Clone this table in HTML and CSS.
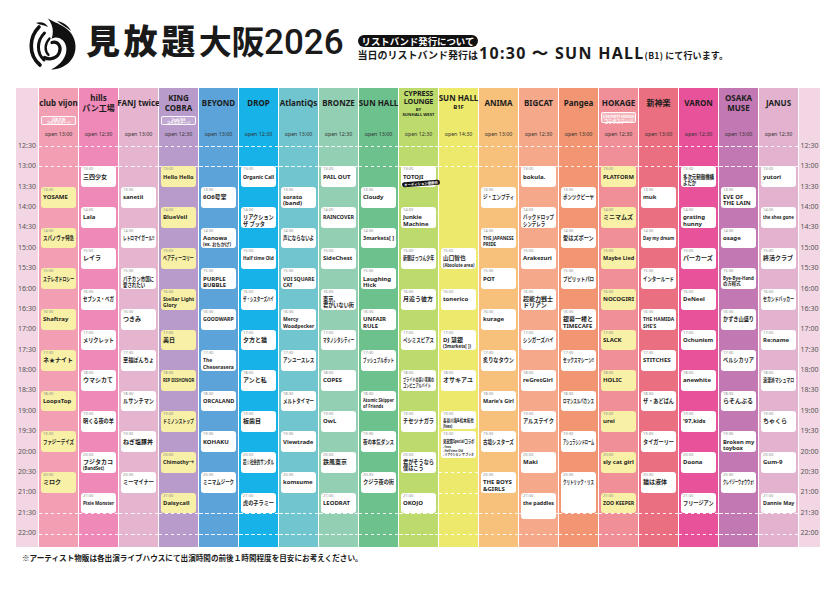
FILE: index.html
```html
<!DOCTYPE html>
<html lang="ja">
<head>
<meta charset="utf-8">
<title>見放題大阪2026 タイムテーブル</title>
<link rel="stylesheet" href="styles.css">
</head>
<body>
<header class="top">
  <div class="logo">
    <svg viewBox="0 0 50 52" width="50" height="52">
      <path d="M12 9 C2 19 1 37 13 47" fill="none" stroke="#111" stroke-width="3.6" stroke-linecap="round"/>
      <path d="M17.5 15 C9.5 23 9.5 35 17 42" fill="none" stroke="#111" stroke-width="3" stroke-linecap="round"/>
      <path d="M22.5 20.5 C17.5 26 17.5 33 21.5 37" fill="none" stroke="#111" stroke-width="2.4" stroke-linecap="round"/>
      <path d="M21 0.5 C30 6 45 9 48 24 C51 39 40 51 24 51.5 C35 46 41 37 39 28 C37 20 29 17.5 24.5 21 C27 14 26 7 21 0.5 Z" fill="#111"/>
      <path d="M25 24.5 C31 23 34.5 28.5 32.5 34 C30.5 40 23 42.5 17.5 39.5" fill="none" stroke="#111" stroke-width="3.2" stroke-linecap="round"/>
      <path d="M9 5 C14 3 19 5 21 9 C17 7 13 7 9 5 Z" fill="#111"/>
      <path d="M30 3 C36 4 42 8 44 13 C39 9 35 7 30 3 Z" fill="#111"/>
    </svg>
  </div>
  <h1 class="title"><span class="t1">見放題</span><span class="t2">大阪</span><span class="t3">2026</span></h1>
  <div class="info">
    <div class="pill">リストバンド発行について</div>
    <p class="wb">当日のリストバンド発行は<b>10:30 〜 SUN HALL</b><span class="b1">(B1)</span><span class="tail">にて行います。</span></p>
  </div>
</header>

<main class="table">
  <div class="timecol">
    <div>12:30</div><div>13:00</div><div>13:30</div><div>14:00</div><div>14:30</div><div>15:00</div><div>15:30</div><div>16:00</div><div>16:30</div><div>17:00</div><div>17:30</div><div>18:00</div><div>18:30</div><div>19:00</div><div>19:30</div><div>20:00</div><div>20:30</div><div>21:00</div><div>21:30</div><div>22:00</div>
  </div>

  <section class="venue c1">
    <div class="vname">club vijon</div>
    <div class="collab"><span class="badge">学生大阪<br>コラボステージ</span></div>
    <div class="open">open 13:00</div>
    <div class="slots">
      <div class="slot y r3"><div class="tm">13:30</div><div class="nm">YOSAME</div></div>
      <div class="slot y r5"><div class="tm">14:30</div><div class="nm">スパノヴァ特急</div></div>
      <div class="slot y r7"><div class="tm">15:30</div><div class="nm">ステレオドロシー</div></div>
      <div class="slot y r9"><div class="tm">16:30</div><div class="nm">Shaftray</div></div>
      <div class="slot y r11"><div class="tm">17:30</div><div class="nm">ネ★ナイト</div></div>
      <div class="slot y r13"><div class="tm">18:30</div><div class="nm">LoopsTop</div></div>
      <div class="slot y r15"><div class="tm">19:30</div><div class="nm">ファジーデイズ</div></div>
      <div class="slot y r17"><div class="tm">20:30</div><div class="nm">ミロク</div></div>
    </div>
  </section>

  <section class="venue c2">
    <div class="vname two">hills<br>パン工場</div>
    <div class="collab"></div>
    <div class="open">open 12:30</div>
    <div class="slots">
      <div class="slot r2"><div class="tm">13:00</div><div class="nm">三四少女</div></div>
      <div class="slot r4"><div class="tm">14:00</div><div class="nm">Lala</div></div>
      <div class="slot r6"><div class="tm">15:00</div><div class="nm">レイラ</div></div>
      <div class="slot r8"><div class="tm">16:00</div><div class="nm">セブンス・ベガ</div></div>
      <div class="slot r10"><div class="tm">17:00</div><div class="nm">メリクレット</div></div>
      <div class="slot r12"><div class="tm">18:00</div><div class="nm">ウマシカて</div></div>
      <div class="slot r14"><div class="tm">19:00</div><div class="nm">明くる夜の羊</div></div>
      <div class="slot r16"><div class="tm">20:00</div><div class="nm">フジタカコ<br><span class="sub">(BandSet)</span></div></div>
      <div class="slot r18"><div class="tm">21:00</div><div class="nm">Pixie Monster</div></div>
    </div>
  </section>

  <section class="venue c3">
    <div class="vname">FANJ twice</div>
    <div class="collab"></div>
    <div class="open">open 13:00</div>
    <div class="slots">
      <div class="slot r3"><div class="tm">13:30</div><div class="nm">sanetii</div></div>
      <div class="slot r5"><div class="tm">14:30</div><div class="nm">レトロマイガール!!</div></div>
      <div class="slot r7"><div class="tm">15:30</div><div class="nm">パチカン市国に<br>愛されたい</div></div>
      <div class="slot r9"><div class="tm">16:30</div><div class="nm">つきみ</div></div>
      <div class="slot r11"><div class="tm">17:30</div><div class="nm">至福ぽんちょ</div></div>
      <div class="slot r13"><div class="tm">18:30</div><div class="nm">ルサンチマン</div></div>
      <div class="slot r15"><div class="tm">19:30</div><div class="nm">ねぎ塩豚丼</div></div>
      <div class="slot r17"><div class="tm">20:30</div><div class="nm">ミーマイナー</div></div>
    </div>
  </section>

  <section class="venue c4">
    <div class="vname two">KING<br>COBRA</div>
    <div class="collab"><span class="badge">2ndLINE<br>コラボステージ</span></div>
    <div class="open">open 12:30</div>
    <div class="slots">
      <div class="slot y r2"><div class="tm">13:00</div><div class="nm">Hello Hello</div></div>
      <div class="slot y r4"><div class="tm">14:00</div><div class="nm">BlueVeil</div></div>
      <div class="slot y r6"><div class="tm">15:00</div><div class="nm">ベアディーコリー</div></div>
      <div class="slot y r8"><div class="tm">16:00</div><div class="nm">Stellar Light<br>Glory</div></div>
      <div class="slot y r10"><div class="tm">17:00</div><div class="nm">美日</div></div>
      <div class="slot y r12"><div class="tm">18:00</div><div class="nm">RIP DISHONOR</div></div>
      <div class="slot y r14"><div class="tm">19:00</div><div class="nm">ドミノンストップ</div></div>
      <div class="slot y r16"><div class="tm">20:00</div><div class="nm">Chimothy→</div></div>
      <div class="slot y r18"><div class="tm">21:00</div><div class="nm">Daisycall</div></div>
    </div>
  </section>

  <section class="venue c5">
    <div class="vname">BEYOND</div>
    <div class="collab"></div>
    <div class="open">open 13:00</div>
    <div class="slots">
      <div class="slot r3"><div class="tm">13:30</div><div class="nm">6O6号室</div></div>
      <div class="slot r5"><div class="tm">14:30</div><div class="nm">Aonowa<br><span class="sub">(ex. おもかげ)</span></div></div>
      <div class="slot r7"><div class="tm">15:30</div><div class="nm">PURPLE<br>BUBBLE</div></div>
      <div class="slot r9"><div class="tm">16:30</div><div class="nm">GOODWARP</div></div>
      <div class="slot r11"><div class="tm">17:30</div><div class="nm">The<br>Cheserasera</div></div>
      <div class="slot r13"><div class="tm">18:30</div><div class="nm">ORCALAND</div></div>
      <div class="slot r15"><div class="tm">19:30</div><div class="nm">KOHAKU</div></div>
      <div class="slot r17"><div class="tm">20:30</div><div class="nm">ミニマムジーク</div></div>
    </div>
  </section>

  <section class="venue c6">
    <div class="vname">DROP</div>
    <div class="collab"></div>
    <div class="open">open 12:30</div>
    <div class="slots">
      <div class="slot r2"><div class="tm">13:00</div><div class="nm">Organic Call</div></div>
      <div class="slot r4"><div class="tm">14:00</div><div class="nm">リアクション<br>ザ ブッタ</div></div>
      <div class="slot r6"><div class="tm">15:00</div><div class="nm">Half time Old</div></div>
      <div class="slot r8"><div class="tm">16:00</div><div class="nm">ザ・シスターズハイ</div></div>
      <div class="slot r10"><div class="tm">17:00</div><div class="nm">夕方と猫</div></div>
      <div class="slot r12"><div class="tm">18:00</div><div class="nm">アンと私</div></div>
      <div class="slot r14"><div class="tm">19:00</div><div class="nm">板歯目</div></div>
      <div class="slot r16"><div class="tm">20:00</div><div class="nm">超☆社会的サンダル</div></div>
      <div class="slot r18"><div class="tm">21:00</div><div class="nm">虎の子ラミー</div></div>
    </div>
  </section>

  <section class="venue c7">
    <div class="vname">AtlantiQs</div>
    <div class="collab"></div>
    <div class="open">open 13:00</div>
    <div class="slots">
      <div class="slot r3"><div class="tm">13:30</div><div class="nm">sorato<br>(band)</div></div>
      <div class="slot r5"><div class="tm">14:30</div><div class="nm">声にならないよ</div></div>
      <div class="slot r7"><div class="tm">15:30</div><div class="nm">VOI SQUARE<br>CAT</div></div>
      <div class="slot r9"><div class="tm">16:30</div><div class="nm">Mercy<br>Woodpecker</div></div>
      <div class="slot r11"><div class="tm">17:30</div><div class="nm">アンユースレス</div></div>
      <div class="slot r13"><div class="tm">18:30</div><div class="nm">メルトタイマー</div></div>
      <div class="slot r15"><div class="tm">19:30</div><div class="nm">Viewtrade</div></div>
      <div class="slot r17"><div class="tm">20:30</div><div class="nm">komsume</div></div>
    </div>
  </section>

  <section class="venue c8">
    <div class="vname">BRONZE</div>
    <div class="collab"></div>
    <div class="open">open 12:30</div>
    <div class="slots">
      <div class="slot r2"><div class="tm">13:00</div><div class="nm">PAIL OUT</div></div>
      <div class="slot r4"><div class="tm">14:00</div><div class="nm">RAINCOVER</div></div>
      <div class="slot r6"><div class="tm">15:00</div><div class="nm">SideChest</div></div>
      <div class="slot r8"><div class="tm">16:00</div><div class="nm">東京、<br>君がいない街</div></div>
      <div class="slot r10"><div class="tm">17:00</div><div class="nm">マタノシタシティー</div></div>
      <div class="slot r12"><div class="tm">18:00</div><div class="nm">COPES</div></div>
      <div class="slot r14"><div class="tm">19:00</div><div class="nm">OwL</div></div>
      <div class="slot r16"><div class="tm">20:00</div><div class="nm">鉄風東京</div></div>
      <div class="slot r18"><div class="tm">21:00</div><div class="nm">LEODRAT</div></div>
    </div>
  </section>

  <section class="venue c9">
    <div class="vname">SUN HALL</div>
    <div class="collab"></div>
    <div class="open">open 13:00</div>
    <div class="slots">
      <div class="slot r3"><div class="tm">13:30</div><div class="nm">Cloudy</div></div>
      <div class="slot r5"><div class="tm">14:30</div><div class="nm">3markets[ ]</div></div>
      <div class="slot r7"><div class="tm">15:30</div><div class="nm">Laughing<br>Hick</div></div>
      <div class="slot r9"><div class="tm">16:30</div><div class="nm">UNFAIR<br>RULE</div></div>
      <div class="slot r11"><div class="tm">17:30</div><div class="nm">プッシュプルポット</div></div>
      <div class="slot r13"><div class="tm">18:30</div><div class="nm sm">Atomic Skipper<br>of Friends</div></div>
      <div class="slot r15"><div class="tm">19:30</div><div class="nm">夜の本気ダンス</div></div>
      <div class="slot r17"><div class="tm">20:30</div><div class="nm">クジラ夜の街</div></div>
    </div>
  </section>

  <section class="venue c10">
    <div class="vname cy"><span class="cyn">CYPRESS<br>LOUNGE</span><small>BY<br>SUNHALL WEST</small></div>
    <div class="collab"></div>
    <div class="open">open 12:30</div>
    <div class="slots">
      <div class="slot r2"><div class="tm">13:00</div><div class="nm">TOTOJI</div><span class="aud">オーディション優勝枠</span></div>
      <div class="slot r4"><div class="tm">14:00</div><div class="nm">Junkie<br>Machine</div></div>
      <div class="slot r6"><div class="tm">15:00</div><div class="nm">新聞ぼっつん少年</div></div>
      <div class="slot r8"><div class="tm">16:00</div><div class="nm">月追う彼方</div></div>
      <div class="slot r10"><div class="tm">17:00</div><div class="nm">ペシミスピアス</div></div>
      <div class="slot r12"><div class="tm">18:00</div><div class="nm sm">プライドの高い某国の<br>コンビニアルバイト</div></div>
      <div class="slot r14"><div class="tm">19:00</div><div class="nm">チセツナガラ</div></div>
      <div class="slot r16"><div class="tm">20:00</div><div class="nm">君がそうなら<br>僕はこう</div></div>
      <div class="slot r18"><div class="tm">21:00</div><div class="nm">OKOJO</div></div>
    </div>
  </section>

  <section class="venue c11">
    <div class="vname b1f"><span>SUN HALL</span><small>B1F</small></div>
    <div class="collab"></div>
    <div class="open">open 14:30</div>
    <div class="slots extra">
      <div class="slot r6"><div class="tm">15:00</div><div class="nm">山口智也<br><span class="sub">(Absolute area)</span></div></div>
      <div class="slot r8"><div class="tm">16:00</div><div class="nm">tonerico</div></div>
      <div class="slot r10"><div class="tm">17:00</div><div class="nm">DJ 慧銀<br><span class="sub">(3markets[ ])</span></div></div>
      <div class="slot r12"><div class="tm">18:00</div><div class="nm">オサキアユ</div></div>
      <div class="slot r14 short"><div class="tm">19:00</div><div class="nm sm">長谷川海&amp;松本拓也<br><span class="sub">(fews)</span></div></div>
      <div class="slot r15 sp"><div class="tm">19:30</div><div class="nm sm">見放題Specialコラボ</div><div class="lst">- fews<br>- Half time Old<br>- リアクション ザ ブッタ</div></div>
    </div>
  </section>

  <section class="venue c12">
    <div class="vname">ANIMA</div>
    <div class="collab"></div>
    <div class="open">open 13:00</div>
    <div class="slots">
      <div class="slot r3"><div class="tm">13:30</div><div class="nm">ジ・エンプティ</div></div>
      <div class="slot r5"><div class="tm">14:30</div><div class="nm">THE JAPANESE<br>PRIDE</div></div>
      <div class="slot r7"><div class="tm">15:30</div><div class="nm">POT</div></div>
      <div class="slot r9"><div class="tm">16:30</div><div class="nm">kurage</div></div>
      <div class="slot r11"><div class="tm">17:30</div><div class="nm">炙りなタウン</div></div>
      <div class="slot r13"><div class="tm">18:30</div><div class="nm">Marie's Girl</div></div>
      <div class="slot r15"><div class="tm">19:30</div><div class="nm">古墳シスターズ</div></div>
      <div class="slot r17"><div class="tm">20:30</div><div class="nm">THE BOYS<br>&amp;GIRLS</div></div>
    </div>
  </section>

  <section class="venue c13">
    <div class="vname">BIGCAT</div>
    <div class="collab"></div>
    <div class="open">open 12:30</div>
    <div class="slots">
      <div class="slot r2"><div class="tm">13:00</div><div class="nm">bokula.</div></div>
      <div class="slot r4"><div class="tm">14:00</div><div class="nm">バックドロップ<br>シンデレラ</div></div>
      <div class="slot r6"><div class="tm">15:00</div><div class="nm">Arakezuri</div></div>
      <div class="slot r8"><div class="tm">16:00</div><div class="nm">超能力戦士<br>ドリアン</div></div>
      <div class="slot r10"><div class="tm">17:00</div><div class="nm">シンガーズハイ</div></div>
      <div class="slot r12"><div class="tm">18:00</div><div class="nm">reGretGirl</div></div>
      <div class="slot r14"><div class="tm">19:00</div><div class="nm">アルステイク</div></div>
      <div class="slot r16"><div class="tm">20:00</div><div class="nm">Maki</div></div>
      <div class="slot r18 mid"><div class="tm">21:00</div><div class="nm">the paddles</div></div>
    </div>
  </section>

  <section class="venue c14">
    <div class="vname">Pangea</div>
    <div class="collab"></div>
    <div class="open">open 13:00</div>
    <div class="slots">
      <div class="slot r3"><div class="tm">13:30</div><div class="nm">ポンツクピーヤ</div></div>
      <div class="slot r5"><div class="tm">14:30</div><div class="nm">愛はズボーン</div></div>
      <div class="slot r7"><div class="tm">15:30</div><div class="nm">プピリットパロ</div></div>
      <div class="slot r9"><div class="tm">16:30</div><div class="nm">銀幕一楼と<br>TIMECAFE</div></div>
      <div class="slot r11"><div class="tm">17:30</div><div class="nm">セックスマシーン!!</div></div>
      <div class="slot r13"><div class="tm">18:30</div><div class="nm">ロマンスルバカンス</div></div>
      <div class="slot r15"><div class="tm">19:30</div><div class="nm">アシュラシンドローム</div></div>
      <div class="slot r17 tall"><div class="tm">20:30</div><div class="nm">クリトリック・リス</div></div>
    </div>
  </section>

  <section class="venue c15">
    <div class="vname">HOKAGE</div>
    <div class="collab"><span class="badge hk"><small>LIVE PARTY HOKAGE</small><br>コラボステージ</span></div>
    <div class="open">open 12:30</div>
    <div class="slots">
      <div class="slot y r2"><div class="tm">13:00</div><div class="nm">PLATFORM</div></div>
      <div class="slot y r4"><div class="tm">14:00</div><div class="nm">ミニマムズ</div></div>
      <div class="slot y r6"><div class="tm">15:00</div><div class="nm">Maybe Lied</div></div>
      <div class="slot y r8"><div class="tm">16:00</div><div class="nm">NOCOGIRI</div></div>
      <div class="slot y r10"><div class="tm">17:00</div><div class="nm">SLACK</div></div>
      <div class="slot y r12"><div class="tm">18:00</div><div class="nm">HOLIC</div></div>
      <div class="slot y r14"><div class="tm">19:00</div><div class="nm">urei</div></div>
      <div class="slot y r16"><div class="tm">20:00</div><div class="nm">sly cat girl</div></div>
      <div class="slot y r18"><div class="tm">21:00</div><div class="nm">ZOO KEEPER</div></div>
    </div>
  </section>

  <section class="venue c16">
    <div class="vname">新神楽</div>
    <div class="collab"></div>
    <div class="open">open 13:00</div>
    <div class="slots">
      <div class="slot r3"><div class="tm">13:30</div><div class="nm">muk</div></div>
      <div class="slot r5"><div class="tm">14:30</div><div class="nm">Day my dream</div></div>
      <div class="slot r7"><div class="tm">15:30</div><div class="nm">インタールード</div></div>
      <div class="slot r9"><div class="tm">16:30</div><div class="nm">THE HAMIDA<br>SHE'S</div></div>
      <div class="slot r11"><div class="tm">17:30</div><div class="nm">STITCHES</div></div>
      <div class="slot r13"><div class="tm">18:30</div><div class="nm">ザ・あどばん</div></div>
      <div class="slot r15"><div class="tm">19:30</div><div class="nm">タイガーリー</div></div>
      <div class="slot r17"><div class="tm">20:30</div><div class="nm">猫は液体</div></div>
    </div>
  </section>

  <section class="venue c17">
    <div class="vname">VARON</div>
    <div class="collab"></div>
    <div class="open">open 12:30</div>
    <div class="slots">
      <div class="slot r2"><div class="tm">13:00</div><div class="nm">多次元制御機構<br>よだか</div></div>
      <div class="slot r4"><div class="tm">14:00</div><div class="nm">grating<br>hunny</div></div>
      <div class="slot r6"><div class="tm">15:00</div><div class="nm">パーカーズ</div></div>
      <div class="slot r8"><div class="tm">16:00</div><div class="nm">DeNeel</div></div>
      <div class="slot r10"><div class="tm">17:00</div><div class="nm">Ochunism</div></div>
      <div class="slot r12"><div class="tm">18:00</div><div class="nm">anewhite</div></div>
      <div class="slot r14"><div class="tm">19:00</div><div class="nm">'97,kids</div></div>
      <div class="slot r16"><div class="tm">20:00</div><div class="nm">Doona</div></div>
      <div class="slot r18"><div class="tm">21:00</div><div class="nm">フリージアン</div></div>
    </div>
  </section>

  <section class="venue c18">
    <div class="vname two">OSAKA<br>MUSE</div>
    <div class="collab"></div>
    <div class="open">open 13:00</div>
    <div class="slots">
      <div class="slot r3"><div class="tm">13:30</div><div class="nm">EVE OF<br>THE LAIN</div></div>
      <div class="slot r5"><div class="tm">14:30</div><div class="nm">osage</div></div>
      <div class="slot r7"><div class="tm">15:30</div><div class="nm sm">Bye-Bye-Hand<br>の方程式</div></div>
      <div class="slot r9"><div class="tm">16:30</div><div class="nm">かずき山盛り</div></div>
      <div class="slot r11"><div class="tm">17:30</div><div class="nm">ベルシカリア</div></div>
      <div class="slot r13"><div class="tm">18:30</div><div class="nm">らそんぶる</div></div>
      <div class="slot r15"><div class="tm">19:30</div><div class="nm">Broken my<br>toybox</div></div>
      <div class="slot r17"><div class="tm">20:30</div><div class="nm">クレイジーウォウウォ!</div></div>
    </div>
  </section>

  <section class="venue c19">
    <div class="vname">JANUS</div>
    <div class="collab"></div>
    <div class="open">open 12:30</div>
    <div class="slots">
      <div class="slot r2"><div class="tm">13:00</div><div class="nm">yutori</div></div>
      <div class="slot r4"><div class="tm">14:00</div><div class="nm">the shes gone</div></div>
      <div class="slot r6"><div class="tm">15:00</div><div class="nm">終活クラブ</div></div>
      <div class="slot r8"><div class="tm">16:00</div><div class="nm">セカンドバッカー</div></div>
      <div class="slot r10"><div class="tm">17:00</div><div class="nm">Re:name</div></div>
      <div class="slot r12"><div class="tm">18:00</div><div class="nm">浪漫派マシュマロ</div></div>
      <div class="slot r14"><div class="tm">19:00</div><div class="nm">ちゃくら</div></div>
      <div class="slot r16"><div class="tm">20:00</div><div class="nm">Gum-9</div></div>
      <div class="slot r18"><div class="tm">21:00</div><div class="nm">Dannie May</div></div>
    </div>
  </section>

  <div class="timecol">
    <div>12:30</div><div>13:00</div><div>13:30</div><div>14:00</div><div>14:30</div><div>15:00</div><div>15:30</div><div>16:00</div><div>16:30</div><div>17:00</div><div>17:30</div><div>18:00</div><div>18:30</div><div>19:00</div><div>19:30</div><div>20:00</div><div>20:30</div><div>21:00</div><div>21:30</div><div>22:00</div>
  </div>
</main>

<p class="note">※アーティスト物販は各出演ライブハウスにて出演時間の前後１時間程度を目安にお考えください。</p>
<script src="script.js"></script>
</body>
</html>
```

FILE: styles.css
```css
html, body { margin: 0; padding: 0; background: #fff; }
body { font-family: "Noto Sans", "Noto Sans CJK JP", sans-serif; color: #1a1a1a; width: 840px; height: 594px; overflow: hidden; }

/* ---------- header ---------- */
.top { display: flex; align-items: flex-start; height: 88px; }
.logo { width: 50px; height: 52px; margin: 18px 0 0 27px; }
.logo svg { display: block; }
.title { margin: 22px 0 0 9px; font-weight: 900; line-height: 36px; white-space: nowrap; }
.t1 { font: 900 34px/36px "Noto Sans CJK JP", sans-serif; letter-spacing: 3.6px; }
.t2 { font: 700 33px/36px "Noto Sans CJK JP", sans-serif; letter-spacing: -0.4px; }
.t3 { font: 500 35px/36px "Roboto", "Noto Sans", sans-serif; letter-spacing: 0; }
.info { margin: 35px 0 0 14px; white-space: nowrap; }
.pill { display: block; width: max-content; height: 12px; padding: 0 4px; background: #111; color: #fff; border-radius: 6px; font: 700 9.4px/12px "Noto Sans CJK JP", sans-serif; }
.wb { margin: 0; font: 700 10px/13px "Noto Sans CJK JP", sans-serif; }
.wb b { font: 700 16px/13px "Noto Sans", sans-serif; letter-spacing: 1.3px; margin-left: 1px; }
.wb .b1 { font: 700 8.6px/13px "Noto Sans CJK JP", sans-serif; margin: 0 2px 0 0; letter-spacing: 0.3px; }
.wb .tail { font-size: 9px; letter-spacing: 0.1px; }

/* ---------- table ---------- */
.table { display: grid; grid-template-columns: 22px repeat(19, 39px) 21px; column-gap: 1px; margin-left: 16px; }
.timecol { background: #f3d6e3; padding-top: 47.8px; height: 410.8px; }
.timecol div { height: 20.4px; font: 400 7px/20.4px "Noto Sans", sans-serif; color: #555; text-align: center; }

.venue { display: flex; flex-direction: column; min-width: 0; }
.vname { height: 28px; display: flex; flex-direction: column; justify-content: center; align-items: center; text-align: center; font: 700 8px/9px "Noto Sans", "Noto Sans CJK JP", sans-serif; color: #1c1c1c; white-space: nowrap; }
.vname.two { line-height: 9.6px; padding-top: 1px; box-sizing: border-box; }
.vname.cy { justify-content: flex-start; padding-top: 2px; box-sizing: border-box; height: 28px; }
.vname.cy .cyn { font-size: 7.3px; line-height: 7.6px; letter-spacing: -0.2px; }
.vname.cy small { display: block; font-size: 4.2px; line-height: 5.6px; margin-top: 1.4px; }
.vname.b1f { justify-content: flex-start; padding-top: 5px; box-sizing: border-box; }
.vname.b1f span { line-height: 9.6px; }
.vname.b1f small { display: block; font-size: 6px; line-height: 7px; margin-top: 1px; }
.collab { height: 10px; display: flex; justify-content: center; align-items: flex-start; }
.badge { box-sizing: border-box; width: 35px; height: 8.6px; border: 0.8px solid rgba(255,255,255,0.95); border-radius: 2px; color: #fff; font: 700 3.4px/3.6px "Noto Sans CJK JP", sans-serif; text-align: center; padding-top: 0.5px; background: rgba(255,255,255,0.12); }
.badge.hk { margin-top: -4px; height: 11px; font-size: 4.2px; line-height: 4.6px; background: rgba(255,255,255,0.35); }
.badge.hk small { font-size: 3.2px; }
.open { height: 16px; margin-bottom: 4px; font: 400 5.3px/16px "Noto Sans", sans-serif; color: #333; text-align: center; }

.slots {
  display: grid; grid-template-columns: minmax(0, 1fr); grid-template-rows: repeat(19, 20.4px); padding-bottom: 13px;
  background-image:
    repeating-linear-gradient(90deg, rgba(255,255,255,.9) 0 3.5px, transparent 3.5px 6px),
    repeating-linear-gradient(90deg, rgba(255,255,255,.9) 0 3.5px, transparent 3.5px 6px),
    repeating-linear-gradient(90deg, rgba(255,255,255,.9) 0 3.5px, transparent 3.5px 6px),
    repeating-linear-gradient(90deg, rgba(255,255,255,.9) 0 3.5px, transparent 3.5px 6px);
  background-size: 100% 1px;
  background-repeat: no-repeat;
  background-position: 0 0, 0 20.4px, 0 367.2px, 0 387.6px;
}
.slots.extra {
  background-image:
    repeating-linear-gradient(90deg, rgba(255,255,255,.9) 0 3.5px, transparent 3.5px 6px),
    repeating-linear-gradient(90deg, rgba(255,255,255,.9) 0 3.5px, transparent 3.5px 6px),
    repeating-linear-gradient(90deg, rgba(255,255,255,.9) 0 3.5px, transparent 3.5px 6px),
    repeating-linear-gradient(90deg, rgba(255,255,255,.9) 0 3.5px, transparent 3.5px 6px),
    repeating-linear-gradient(90deg, rgba(255,255,255,.9) 0 3.5px, transparent 3.5px 6px),
    repeating-linear-gradient(90deg, rgba(255,255,255,.9) 0 3.5px, transparent 3.5px 6px);
  background-position: 0 0, 0 20.4px, 0 326.4px, 0 346.8px, 0 367.2px, 0 387.6px;
}

.slot { grid-column: 1; align-self: start; position: relative; box-sizing: border-box; min-width: 0; margin: 0 2px; height: 20.8px; padding: 1px 2px 0; background: #fff; border-radius: 3px; }
.slot.y { background: #f8f0a6; }
.slot.short { height: 18px; }
.slot.sp { height: 27px; }
.slot.mid { height: 26px; }
.slot.tall { height: 41.2px; }
.tm { font: 400 4px/4.6px "Noto Sans", sans-serif; color: #8c8c8c; }
.nm { margin-top: 1.6px; font: 700 6px/6.4px "Noto Sans", "Noto Sans CJK JP", sans-serif; color: #1e1e1e; white-space: nowrap; transform-origin: 0 50%; }
.nm.sm { font-size: 5px; line-height: 5.8px; }
.sub { font-size: 4.4px; }
.lst { font: 700 3.5px/4.2px "Noto Sans", "Noto Sans CJK JP", sans-serif; color: #333; white-space: nowrap; margin-top: 0.5px; transform-origin: 0 50%; }
.aud { position: absolute; left: 1px; top: 15px; z-index: 2; width: 38px; height: 5.4px; background: #141414; color: #fff; border-radius: 3px; font: 700 3.4px/5.4px "Noto Sans CJK JP", sans-serif; text-align: center; white-space: nowrap; transform: rotate(-4deg); }

.r1{grid-row:1}.r2{grid-row:2}.r3{grid-row:3}.r4{grid-row:4}.r5{grid-row:5}.r6{grid-row:6}.r7{grid-row:7}.r8{grid-row:8}.r9{grid-row:9}.r10{grid-row:10}
.r11{grid-row:11}.r12{grid-row:12}.r13{grid-row:13}.r14{grid-row:14}.r15{grid-row:15}.r16{grid-row:16}.r17{grid-row:17}.r18{grid-row:18}.r19{grid-row:19}

.c1 { background: #f29fb4; }
.c2 { background: #ee89b8; }
.c3 { background: #e5b4cf; }
.c4 { background: #b99bcb; }
.c5 { background: #5ba3d9; }
.c6 { background: #16b2e8; }
.c7 { background: #70c5cf; }
.c8 { background: #92cfb3; }
.c9 { background: #6cc18d; }
.c10 { background: #bddb6c; }
.c11 { background: #ece96c; }
.c12 { background: #f7c07b; }
.c13 { background: #f6a98a; }
.c14 { background: #f19572; }
.c15 { background: #f08f98; }
.c16 { background: #ea6f80; }
.c17 { background: #e7529a; }
.c18 { background: #c279b3; }
.c19 { background: #e2b2cf; }

.note { margin: 6px 0 0 22px; font: 700 7.6px/10px "Noto Sans CJK JP", sans-serif; color: #1a1a1a; white-space: nowrap; }
```

FILE: script.js
```js
document.querySelectorAll('.nm, .lst').forEach(function (el) {
  var avail = el.clientWidth;
  var w = el.scrollWidth;
  if (w > avail + 0.5) {
    el.style.transform = 'scaleX(' + (avail / w).toFixed(3) + ')';
  }
});
```
